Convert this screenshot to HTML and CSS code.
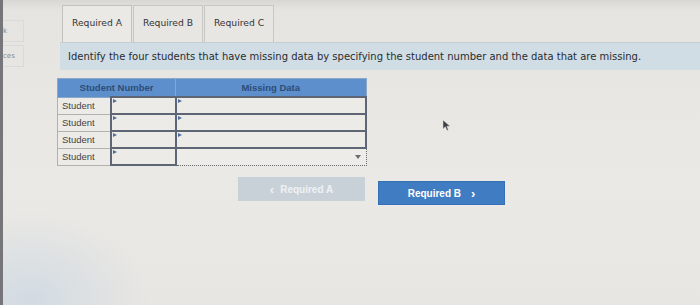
FILE: index.html
```html
<!DOCTYPE html>
<html>
<head>
<meta charset="utf-8">
<link rel="stylesheet" href="styles.css">
</head>
<body>
<div class="page">
  <aside class="sidebar">
    <div class="side-item">k</div>
    <div class="side-item">ces</div>
  </aside>
  <main class="main">
    <nav class="tabs">
      <div class="tab tab-active">Required A</div>
      <div class="tab">Required B</div>
      <div class="tab">Required C</div>
    </nav>
    <div class="instruction">Identify the four students that have missing data by specifying the student number and the data that are missing.</div>
    <table class="grid">
      <thead>
        <tr>
          <th colspan="2" class="h-num">Student Number</th>
          <th class="h-data">Missing Data</th>
        </tr>
      </thead>
      <tbody>
        <tr>
          <td class="label">Student</td>
          <td class="input num"><span class="tri"></span></td>
          <td class="input data"><span class="tri"></span></td>
        </tr>
        <tr>
          <td class="label">Student</td>
          <td class="input num"><span class="tri"></span></td>
          <td class="input data"><span class="tri"></span></td>
        </tr>
        <tr>
          <td class="label">Student</td>
          <td class="input num"><span class="tri"></span></td>
          <td class="input data"><span class="tri"></span></td>
        </tr>
        <tr>
          <td class="label">Student</td>
          <td class="input num"><span class="tri"></span></td>
          <td class="select"><div class="select-box"><span class="caret"></span></div></td>
        </tr>
      </tbody>
    </table>
    <div class="nav-buttons">
      <div class="btn btn-prev"><span class="chev">&lsaquo;</span> Required A</div>
      <div class="btn btn-next">Required B <span class="chev">&rsaquo;</span></div>
    </div>
  </main>
  <svg class="cursor" width="9" height="13" viewBox="0 0 9 13"><path d="M1 1 L1 10 L3.3 7.8 L5 11.5 L6.4 10.8 L4.8 7.3 L8 7.2 Z" fill="#3a3d44" stroke="#d8d6d2" stroke-width="0.6"/></svg>
</div>
</body>
</html>
```
FILE: styles.css
```css
html, body {
  margin: 0;
  padding: 0;
}
body {
  width: 700px;
  height: 305px;
  overflow: hidden;
  background: linear-gradient(180deg, #d9d7d3 0px, #e6e4e0 10px, #ebe9e5 60%, #e8e6e2 100%);
  font-family: "DejaVu Sans", Verdana, sans-serif;
  color: #3a3a3a;
}
.page {
  position: relative;
  display: flex;
  height: 305px;
  background: radial-gradient(ellipse 120px 90px at 30px 300px, rgba(200, 214, 226, 0.7), rgba(200, 214, 226, 0) 100%);
}
.sidebar {
  width: 57px;
  flex: none;
  border-left: 3px solid #76767a;
  padding-top: 20px;
  display: flex;
  flex-direction: column;
  gap: 3px;
}
.side-item {
  width: 20px;
  height: 20px;
  border: 1px solid #dcdad6;
  border-left: none;
  font-size: 7px;
  line-height: 20px;
  color: #8a8a8a;
  overflow: hidden;
}
.main {
  flex: 1;
  display: flex;
  flex-direction: column;
  padding-top: 5px;
}
.tabs {
  display: flex;
  margin-left: 2px;
  gap: 1px;
}
.tab {
  width: 70px;
  height: 37px;
  box-sizing: border-box;
  border: 1px solid #c9c7c3;
  border-bottom: none;
  background: #e8e6e2;
  font-size: 9.2px;
  color: #353535;
  display: flex;
  align-items: center;
  justify-content: center;
  padding-bottom: 3px;
}
.tab-active {
  background: #ebe9e5;
  border-color: #c3c1bd;
}
.instruction {
  height: 27px;
  background: #d0dde5;
  border-top: 1px solid #c4cdd3;
  display: flex;
  align-items: center;
  padding-left: 8px;
  font-size: 10px;
  color: #2a2c2e;
  white-space: nowrap;
}
.grid {
  margin-top: 8px;
  margin-left: -3px;
  border-collapse: collapse;
  font-family: "Liberation Sans", Arial, sans-serif;
  width: 310px;
}
.grid th {
  background: #5d8fcc;
  color: #2c4d78;
  font-size: 9.5px;
  font-weight: bold;
  height: 17px;
  padding: 0;
  border: 1px solid #8aa7c7;
}
.h-num { width: 117px; }
.grid td {
  height: 17px;
  padding: 0;
  box-sizing: border-box;
}
.label {
  width: 53px;
  border: 1px solid #b3b1ae;
  background: #edebe7;
  font-size: 9.5px;
  color: #444;
  padding-left: 4px !important;
}
.input {
  position: relative;
  border: 2px solid #5e6574;
  background: #edebe7;
}
.input.num { width: 64px; }
.tri {
  position: absolute;
  top: 1px;
  left: 1px;
  width: 0;
  height: 0;
  border-top: 2.5px solid transparent;
  border-bottom: 2.5px solid transparent;
  border-left: 4px solid #4a6fa5;
}
.select {
  border: 1px dotted #6a6a6a;
  background: #eeece8;
  padding: 0;
}
.select-box {
  display: flex;
  justify-content: flex-end;
  align-items: center;
  height: 15px;
  padding-right: 5px;
}
.caret {
  width: 0;
  height: 0;
  border-left: 3.5px solid transparent;
  border-right: 3.5px solid transparent;
  border-top: 4px solid #6a6d72;
}
.nav-buttons {
  display: flex;
  gap: 13px;
  padding-left: 178px;
  margin-top: 11px;
}
.btn {
  width: 127px;
  height: 24px;
  display: flex;
  align-items: center;
  justify-content: center;
  font-family: "Liberation Sans", Arial, sans-serif;
  font-weight: bold;
  font-size: 10px;
  color: #fff;
  box-sizing: border-box;
}
.btn-prev {
  background: #c9d1d8;
  color: #eef1f4;
}
.btn-next {
  background: #3f7cc2;
  margin-top: 4px;
  border: 1px solid #3570b6;
}
.chev {
  font-size: 13px;
  margin: 0 6px;
  line-height: 1;
}
.btn-prev .chev { margin-left: 0; margin-right: 6px; }
.btn-next .chev { margin-left: 10px; margin-right: 0; }
.cursor {
  position: absolute;
  left: 442px;
  top: 119px;
}
```
